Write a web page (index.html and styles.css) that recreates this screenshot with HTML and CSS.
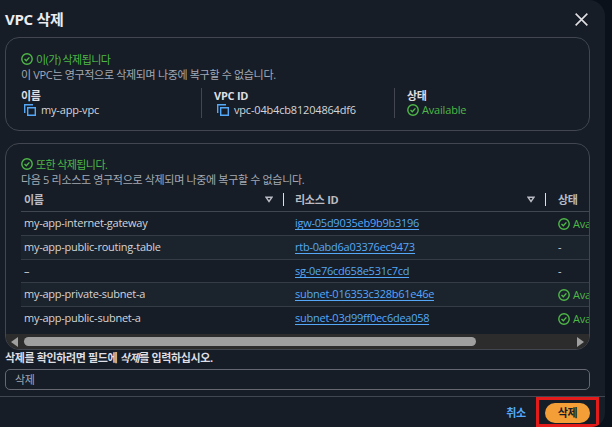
FILE: index.html
```html
<!DOCTYPE html>
<html lang="ko">
<head>
<meta charset="utf-8">
<title>VPC 삭제</title>
<link rel="stylesheet" href="styles.css">
</head>
<body>
<svg class="defs" width="0" height="0">
  <symbol id="ok" viewBox="0 0 12 12"><circle cx="6" cy="6" r="5.2"/><path d="M3.5 6.1 5.3 7.8 8.4 4.4"/></symbol>
  <symbol id="copy" viewBox="0 0 12 12"><path d="M.7 9V.7H9"/><path d="M3.7 3.7h7.6v7.6H3.7z"/></symbol>
  <symbol id="sort" viewBox="0 0 8 7"><path d="M1 1.2h6L4 5.5z"/></symbol>
</svg>
<main class="modal">
  <header class="head">
    <h1>VPC 삭제</h1>
    <svg class="close" viewBox="0 0 12 12"><path d="M.6.6l10.8 10.8M11.4.6.6 11.4"/></svg>
  </header>

  <section class="card summary">
    <p class="status"><svg class="icon"><use href="#ok"/></svg><span>이(가) 삭제됩니다</span></p>
    <p class="note">이 VPC는 영구적으로 삭제되며 나중에 복구할 수 없습니다.</p>
    <dl class="facts">
      <div><dt>이름</dt><dd class="copyable"><svg class="icon copy"><use href="#copy"/></svg><span>my-app-vpc</span></dd></div>
      <div><dt>VPC ID</dt><dd class="copyable"><svg class="icon copy"><use href="#copy"/></svg><span>vpc-04b4cb81204864df6</span></dd></div>
      <div><dt>상태</dt><dd class="available"><svg class="icon"><use href="#ok"/></svg><span>Available</span></dd></div>
    </dl>
  </section>

  <section class="card resources">
    <p class="status"><svg class="icon"><use href="#ok"/></svg><span>또한 삭제됩니다.</span></p>
    <p class="note">다음 5 리소스도 영구적으로 삭제되며 나중에 복구할 수 없습니다.</p>
    <div class="table">
      <div class="row thead">
        <div class="th">이름<svg class="sort"><use href="#sort"/></svg></div>
        <div class="th">리소스 ID<svg class="sort"><use href="#sort"/></svg></div>
        <div class="th">상태</div>
      </div>
      <div class="row"><div>my-app-internet-gateway</div><div><a>igw-05d9035eb9b9b3196</a></div><div class="available"><svg class="icon"><use href="#ok"/></svg><span>Available</span></div></div>
      <div class="row alt"><div>my-app-public-routing-table</div><div><a>rtb-0abd6a03376ec9473</a></div><div>-</div></div>
      <div class="row short"><div>–</div><div><a>sg-0e76cd658e531c7cd</a></div><div>-</div></div>
      <div class="row alt"><div>my-app-private-subnet-a</div><div><a>subnet-016353c328b61e46e</a></div><div class="available"><svg class="icon"><use href="#ok"/></svg><span>Available</span></div></div>
      <div class="row last"><div>my-app-public-subnet-a</div><div><a>subnet-03d99ff0ec6dea058</a></div><div class="available"><svg class="icon"><use href="#ok"/></svg><span>Available</span></div></div>
    </div>
    <div class="scrollbar">
      <svg class="arrow" viewBox="0 0 8 10"><path d="M7 0v10L0 5z"/></svg>
      <div class="thumb"></div>
      <svg class="arrow right" viewBox="0 0 8 10"><path d="M1 0v10l7-5z"/></svg>
    </div>
  </section>

  <label class="confirm">삭제를 확인하려면 필드에 <em>삭제</em>를 입력하십시오.</label>
  <div class="field">삭제</div>
  <footer class="foot">
    <span class="cancel">취소</span>
    <div class="highlight"><span class="delete">삭제</span></div>
  </footer>
</main>
</body>
</html>
```
FILE: styles.css
```css
* { box-sizing: border-box; }
html, body { height: 100%; }
body {
  margin: 0;
  overflow: hidden;
  background: #0b111a;
  color: #d4d5da;
  font: 11px/15px "Open Sans", "Noto Sans CJK KR", sans-serif;
  letter-spacing: -0.25px;
  white-space: nowrap;
}
.defs { position: absolute; }
h1, p, dl, dd { margin: 0; }
svg { fill: none; flex: none; }
.modal {
  width: 605px;
  height: 427px;
  padding-left: 5px;
  background: #161d26;
  border-radius: 0 16px 14px 0;
  overflow: hidden;
}
.head {
  display: flex;
  align-items: center;
  justify-content: space-between;
  height: 37px;
  padding: 1px 17px 0 0;
}
h1 { font-size: 15px; line-height: 20px; letter-spacing: -0.3px; color: #ebebf0; }
.close { width: 13px; height: 13px; stroke: #dedee3; stroke-width: 1.5; }
.card {
  width: 585px;
  border: 1px solid #424650;
  border-radius: 14px;
  padding-left: 15px;
  overflow: hidden;
}
.summary { height: 94px; padding-top: 14px; }
.status, .available, .copyable { display: flex; align-items: center; gap: 3px; }
.status, .available { color: #4fb848; }
.status { height: 15px; padding-bottom: 1px; letter-spacing: -0.6px; }
.status span { padding-top: 1px; }
.icon { width: 12px; height: 12px; stroke: #4fb848; stroke-width: 1.4; }
.copy { stroke: #55a8f8; }
.note { color: #a4a9b3; letter-spacing: -0.33px; }
.facts { display: flex; margin-top: 6px; }
.facts > div { height: 30px; border-left: 1px solid #424650; padding-left: 12px; width: 193px; }
.facts > div:first-child { width: 180px; padding-left: 0; border: 0; }
dt { height: 14px; font-weight: 700; color: #dedee3; }
.copyable { padding-left: 3px; gap: 5px; letter-spacing: -0.18px; }
.available { letter-spacing: -0.18px; }
.resources { height: 207px; margin-top: 12px; padding-top: 13px; }
.table { width: 569px; }
.row {
  display: grid;
  grid-template-columns: 262px 262px 60px;
  height: 24px;
  align-items: center;
  border-bottom: 1px solid #353c46;
}
.row > div { padding-left: 3px; padding-bottom: 2px; }
.row > div:nth-child(2) { padding-left: 12px; }
.row > div:nth-child(3) { padding-left: 13px; }
.row > .available { padding-bottom: 0; }
.alt { background: #1b232d; }
.thead { height: 25px; border-color: #424650; color: #b9bcc4; font-weight: 700; }
.row > .th { display: flex; align-items: center; justify-content: space-between; height: 13px; padding-bottom: 0; }
.th + .th { border-left: 1px solid #dedee3; }
.row > .th:nth-child(2) { padding-left: 11px; }
.row > .th:nth-child(3) { padding-left: 12px; }
.sort { width: 8px; height: 7px; margin-right: 10px; stroke: #b9bcc4; stroke-width: 1.4; }
.short { height: 23px; }
.last { height: 27px; padding-bottom: 4px; border: 0; }
a { display: inline-block; line-height: 13px; color: #55a8f8; border-bottom: 1px solid #55a8f8; }
.scrollbar {
  display: flex;
  align-items: center;
  height: 15px;
  margin-left: -15px;
  padding: 0 5px;
  background: #2c2c2c;
}
.arrow { width: 8px; height: 10px; fill: #9f9f9f; }
.thumb { width: 452px; height: 9px; margin-left: 5px; border-radius: 5px; background: #9f9f9f; }
.right { margin-left: auto; }
.confirm { display: block; height: 19px; line-height: 16px; font-weight: 700; letter-spacing: -0.37px; color: #dedee3; }
.field {
  width: 585px;
  height: 21px;
  padding-left: 9px;
  line-height: 20px;
  border: 1px solid #656871;
  border-radius: 5px;
  color: #a4a9b3;
}
.foot {
  display: flex;
  align-items: flex-start;
  justify-content: flex-end;
  height: 31px;
  margin: 6px 0 0 -5px;
  padding-right: 6px;
  border-top: 1px solid #424650;
  font-weight: 700;
}
.cancel { margin: 8px 10px 0 0; color: #55a8f8; }
.highlight { width: 63px; height: 30px; border: 3px solid #e31b1b; padding: 3px 6px; }
.delete { display: block; width: 45px; height: 20px; border-radius: 10px; background: #f49e38; color: #161d26; text-align: center; line-height: 19px; }
```
